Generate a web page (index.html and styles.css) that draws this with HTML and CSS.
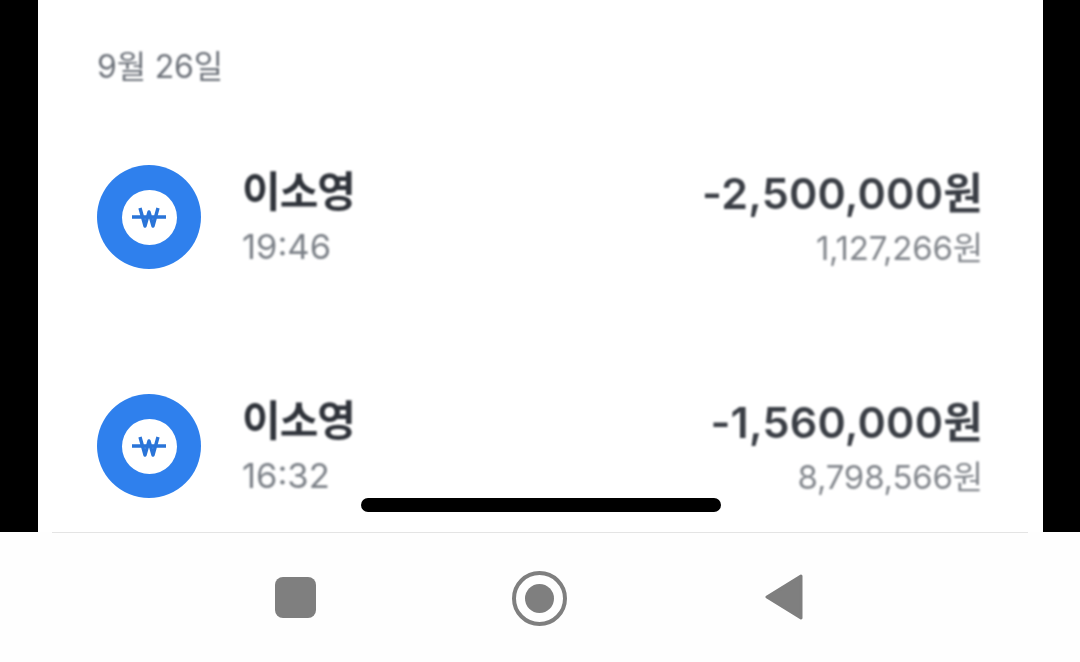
FILE: index.html
```html
<!DOCTYPE html>
<html lang="ko">

<head>
    <title>거래내역</title>
    <link rel="stylesheet" href="styles.css">
</head>

<body>
    <div class="screen">
        <div class="history">
            <p class="date">9월 26일</p>

            <div class="row first">
                <div class="coin">
                    <div class="coin-inner">
                        <svg width="36" height="24" viewBox="0 0 36 24">
                            <path d="M1 12H35M9 3L14 21L18 7L22 21L27 3" fill="none" stroke="#2a74d8" stroke-width="3.4" stroke-linejoin="round"/>
                        </svg>
                    </div>
                </div>
                <div class="who">
                    <div class="name">이소영</div>
                    <div class="time">19:46</div>
                </div>
                <div class="money">
                    <div class="amount">-2,500,000원</div>
                    <div class="balance">1,127,266원</div>
                </div>
            </div>

            <div class="row">
                <div class="coin">
                    <div class="coin-inner">
                        <svg width="36" height="24" viewBox="0 0 36 24">
                            <path d="M1 12H35M9 3L14 21L18 7L22 21L27 3" fill="none" stroke="#2a74d8" stroke-width="3.4" stroke-linejoin="round"/>
                        </svg>
                    </div>
                </div>
                <div class="who">
                    <div class="name">이소영</div>
                    <div class="time">16:32</div>
                </div>
                <div class="money">
                    <div class="amount">-1,560,000원</div>
                    <div class="balance">8,798,566원</div>
                </div>
            </div>

            <div class="home-bar"></div>
        </div>
    </div>

    <div class="nav">
        <div class="nav-line"></div>
        <div class="nav-buttons">
            <div class="nav-square"></div>
            <div class="nav-circle"><div class="nav-dot"></div></div>
            <svg class="nav-back" width="38" height="46" viewBox="0 0 38 46">
                <path d="M36 2L2 23L36 44Z" fill="#7f7f7f" stroke="#7f7f7f" stroke-width="3" stroke-linejoin="round"/>
            </svg>
        </div>
    </div>
</body>

</html>
```

FILE: styles.css
```css
body {
    margin: 0;
    height: 662px;
    overflow: hidden;
    background-color: #fefefe;
    font-family: Inter, "Noto Sans CJK KR", sans-serif;
}

.screen {
    height: 532px;
    background-color: #000;
    padding: 0 37px 0 38px;
    overflow: hidden;
}

.history {
    position: relative;
    height: 532px;
    background-color: #fff;
    padding: 0 60px 0 59px;
}

.date {
    margin: 0;
    padding-top: 48px;
    height: 38px;
    line-height: 38px;
    font-size: 32px;
    letter-spacing: -0.2px;
    color: #6c7179;
    filter: blur(0.8px);
}

.row {
    display: flex;
    align-items: center;
    height: 104px;
    margin-top: 125px;
}

.row.first {
    margin-top: 79px;
}

.coin {
    width: 104px;
    height: 104px;
    flex-shrink: 0;
    border-radius: 50%;
    background-color: #2f80ed;
    display: flex;
    align-items: center;
    justify-content: center;
    filter: blur(0.6px);
}

.coin-inner {
    width: 55px;
    height: 55px;
    border-radius: 50%;
    background-color: #fff;
    display: flex;
    align-items: center;
    justify-content: center;
}

.who {
    margin-left: 41px;
    padding-top: 3px;
    flex: 1;
    filter: blur(0.8px);
}

.name {
    font-size: 42px;
    line-height: 55px;
    font-weight: 700;
    letter-spacing: -1px;
    color: #2f333a;
}

.time {
    font-size: 34.5px;
    line-height: 55px;
    color: #7b8087;
}

.money {
    padding-top: 7px;
    text-align: right;
    filter: blur(0.8px);
}

.amount {
    font-size: 43px;
    line-height: 55px;
    font-weight: 600;
    letter-spacing: 0.2px;
    color: #3a3e45;
}

.balance {
    font-size: 33px;
    line-height: 55px;
    letter-spacing: -0.2px;
    color: #82868c;
}

.home-bar {
    position: absolute;
    left: 323px;
    top: 498px;
    width: 360px;
    height: 14px;
    border-radius: 7px;
    background-color: #000;
    filter: blur(0.6px);
}

.nav {
    height: 130px;
}

.nav-line {
    height: 1px;
    margin: 0 52px;
    background-color: #e4e4e4;
}

.nav-buttons {
    position: relative;
    height: 129px;
}

.nav-square,
.nav-circle,
.nav-back {
    position: absolute;
}

.nav-square {
    left: 275px;
    top: 44px;
    width: 41px;
    height: 41px;
    border-radius: 8px;
    background-color: #7f7f7f;
}

.nav-circle {
    left: 512px;
    top: 38px;
    width: 47px;
    height: 47px;
    border: 4px solid #7f7f7f;
    border-radius: 50%;
    display: flex;
    align-items: center;
    justify-content: center;
}

.nav-dot {
    width: 29px;
    height: 29px;
    border-radius: 50%;
    background-color: #7f7f7f;
}

.nav-back {
    left: 765px;
    top: 41px;
}
```
